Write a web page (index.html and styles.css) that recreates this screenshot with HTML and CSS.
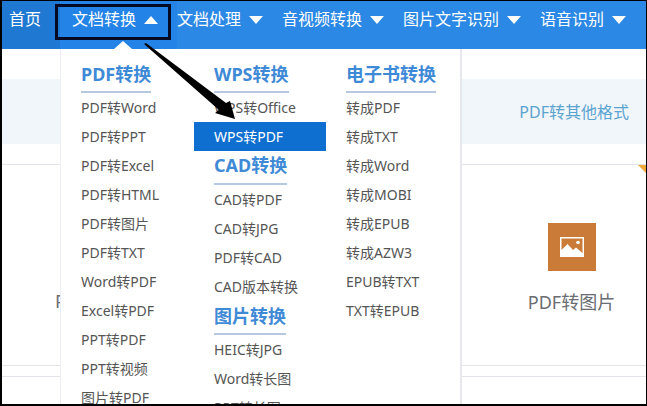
FILE: index.html
```html
<!DOCTYPE html>
<html lang="zh-CN">
<head>
    <meta charset="UTF-8">
    <title>文档转换</title>
    <link rel="stylesheet" href="styles.css">
</head>
<body>
    <div class="frame">
        <nav class="nav">
            <a class="nav-item home">首页</a>
            <a class="nav-item active">文档转换<span class="tri up"></span></a>
            <a class="nav-item">文档处理<span class="tri"></span></a>
            <a class="nav-item">音视频转换<span class="tri"></span></a>
            <a class="nav-item">图片文字识别<span class="tri"></span></a>
            <a class="nav-item">语音识别<span class="tri"></span></a>
        </nav>
        <div class="band">
            <span class="band-link">PDF转其他格式</span>
        </div>
        <div class="cards">
            <div class="card">
                <span class="card-icon">
                    <svg width="24" height="20" viewBox="0 0 24 20">
                        <path d="M0 0H24V20H0Z M1.500 1.500V13L7.500 7L13 13L16 10.500L22.500 16V1.500Z" fill="#fff" fill-rule="evenodd"/>
                        <circle cx="18" cy="5.500" r="1.800" fill="#fff"/>
                    </svg>
                </span>
                <span class="card-title">PDF转图片</span>
            </div>
        </div>
        <div class="foot"></div>

        <div class="stray">P</div>
        <span class="corner"></span>

        <div class="menu">
            <span class="menu-tip"></span>
            <div class="col first">
                <h3>PDF转换</h3>
                <a>PDF转Word</a>
                <a>PDF转PPT</a>
                <a>PDF转Excel</a>
                <a>PDF转HTML</a>
                <a>PDF转图片</a>
                <a>PDF转TXT</a>
                <a>Word转PDF</a>
                <a>Excel转PDF</a>
                <a>PPT转PDF</a>
                <a>PPT转视频</a>
                <a>图片转PDF</a>
            </div>
            <div class="col">
                <h3>WPS转换</h3>
                <a>WPS转Office</a>
                <a class="current">WPS转PDF</a>
                <h3 class="sub">CAD转换</h3>
                <a>CAD转PDF</a>
                <a>CAD转JPG</a>
                <a>PDF转CAD</a>
                <a>CAD版本转换</a>
                <h3 class="sub low">图片转换</h3>
                <a>HEIC转JPG</a>
                <a>Word转长图</a>
                <a>PPT转长图</a>
            </div>
            <div class="col">
                <h3>电子书转换</h3>
                <a>转成PDF</a>
                <a>转成TXT</a>
                <a>转成Word</a>
                <a>转成MOBI</a>
                <a>转成EPUB</a>
                <a>转成AZW3</a>
                <a>EPUB转TXT</a>
                <a>TXT转EPUB</a>
            </div>
        </div>

        <!-- annotation on top of the screenshot -->
        <div class="mark"></div>
        <svg class="arrow" width="647" height="406" viewBox="0 0 647 406">
            <path d="M144 44L146 43L226 103L230 101L235 119L215 113L219 110Z" fill="#000"/>
        </svg>
    </div>
</body>
</html>
```

FILE: styles.css
```css
* {
    box-sizing: border-box;
}
html, body {
    margin: 0;
    padding: 0;
    background: #fff;
}
.frame {
    position: relative;
    width: 647px;
    height: 406px;
    overflow: hidden;
    display: flex;
    flex-direction: column;
    font-family: "Noto Sans", "Noto Sans CJK SC", sans-serif;
    border-top: 1px solid #000;
    border-left: 2px solid #000;
    border-bottom: 2px solid #000;
    border-right: 1px solid #000;
}
.nav {
    display: flex;
    height: 48px;
    flex: none;
    background: #2b88e4;
    color: #fff;
    font-size: 16px;
    line-height: 36px;
}
.nav-item {
    display: flex;
    flex: none;
    padding: 0 19.500px 0 0;
    white-space: nowrap;
}
.home {
    width: 58px;
    padding: 0 0 0 7px;
    background: #1f78d2;
}
.active {
    padding-left: 12px;
    background: #2383e6;
}
.tri {
    width: 0;
    height: 0;
    margin: 15px 0 0 7.500px;
    border-left: 7.500px solid transparent;
    border-right: 7.500px solid transparent;
    border-top: 8px solid #fff;
}
.tri.up {
    border-top: 0;
    border-bottom: 8px solid #fff;
}
.band {
    margin-top: 30px;
    height: 65px;
    flex: none;
    padding: 0 17px 2px 0;
    background: #f1f6fb;
    display: flex;
    justify-content: flex-end;
    align-items: center;
}
.band-link {
    font-size: 16px;
    color: #5ba3cf;
}
.cards {
    margin-top: 20px;
    height: 202px;
    flex: none;
    border-top: 1px solid #e2e4ea;
    border-bottom: 1px solid #e2e4ea;
    display: flex;
    justify-content: flex-end;
}
.card {
    width: 143px;
    margin-right: 3px;
    padding-top: 58px;
    display: flex;
    flex-direction: column;
    align-items: center;
}
.card-icon {
    width: 48px;
    height: 48px;
    background: #c97b37;
    display: flex;
    align-items: center;
    justify-content: center;
}
.card-title {
    margin-top: 17px;
    font-size: 18px;
    color: #6a6d72;
}
.foot {
    margin-top: 10px;
    border-top: 1px solid #e2e4ea;
    flex: 1;
}
.stray {
    position: absolute;
    left: 53px;
    top: 288px;
    font-size: 18px;
    color: #6a6d72;
}
.corner {
    position: absolute;
    right: 0;
    top: 164px;
    width: 0;
    height: 0;
    border-top: 8px solid #f2a93b;
    border-left: 8px solid transparent;
}
.menu {
    position: absolute;
    left: 58px;
    top: 48px;
    width: 402px;
    height: 360px;
    background: #fff;
    border-left: 1px solid #eceef3;
    border-right: 2px solid #e6e8ee;
    display: flex;
}
.menu-tip {
    position: absolute;
    left: 53px;
    top: -8px;
    width: 0;
    height: 0;
    border-left: 9px solid transparent;
    border-right: 9px solid transparent;
    border-bottom: 8px solid #fff;
}
.col {
    width: 132px;
    flex: none;
    padding-top: 13px;
}
.col.first {
    width: 133px;
}
.col h3 {
    display: table;
    margin: 0 0 0 20px;
    height: 31px;
    padding: 0;
    font-size: 18px;
    line-height: 24px;
    font-weight: 700;
    color: #3f8ad6;
    border-bottom: 2px solid #b7c9e0;
}
.col h3.sub {
    margin-top: 2px;
    height: 32px;
}
.col h3.sub.low {
    margin-top: 3px;
    height: 31px;
}
.col a {
    display: block;
    height: 29px;
    padding-left: 20px;
    font-size: 14px;
    line-height: 29px;
    color: #555;
    white-space: nowrap;
}
.col a.current {
    background: #0f6fd0;
    color: #fff;
}
.mark {
    position: absolute;
    left: 53px;
    top: 3px;
    width: 116px;
    height: 36px;
    border: 3px solid #050a24;
}
.arrow {
    position: absolute;
    left: -2px;
    top: -1px;
}
```
